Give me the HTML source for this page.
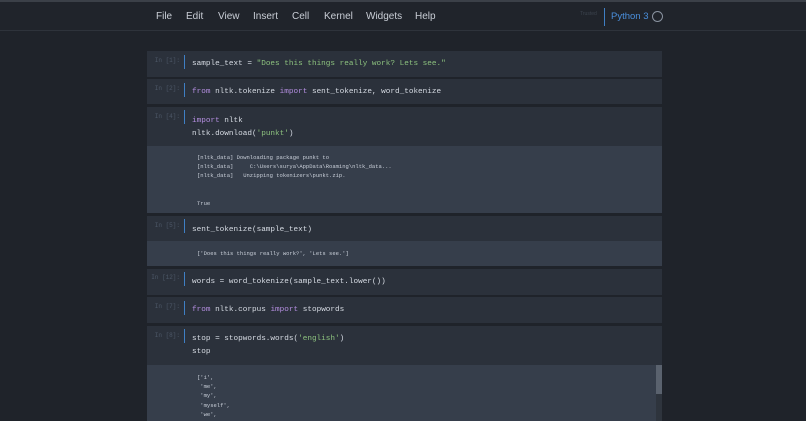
<!DOCTYPE html><html style="overflow:hidden;height:421px"><head><style>
body{margin:0;width:806px;height:421px;overflow:hidden;background:#1f232a;font-family:"Liberation Sans",sans-serif;position:relative}
.top{position:absolute;left:0;top:0;width:806px;height:2px;background:#3b4048}
.hdr{position:absolute;left:0;top:2px;width:806px;height:28px;background:#20242b;border-bottom:1px solid #2e333b}
.m{position:absolute;top:9px;font-size:10px;color:#c9ced6}
.cell{position:absolute;left:147px;width:515px;background:#2b313b}
.p{position:absolute;left:0;width:33px;text-align:right;font-family:"Liberation Mono",monospace;font-size:6px;color:#4d5868}
.bar{position:absolute;left:37px;width:1px;background:#3f7fc4}
.code{position:absolute;left:45px;font-family:"Liberation Mono",monospace;font-size:7.7px;color:#d6dbe3;white-space:pre;line-height:13px}
.out{position:absolute;left:0;width:515px;background:#363e4b;overflow:hidden}
.o{position:absolute;left:50px;font-family:"Liberation Mono",monospace;font-size:5.5px;color:#c8ced8;white-space:pre;line-height:9.2px}
.k{color:#b48ee0}.s{color:#8cc17e}
</style></head><body>
<div class="top"></div>
<div class="hdr">
<span class="m" style="left:156px">File</span><span class="m" style="left:186px">Edit</span><span class="m" style="left:218px">View</span><span class="m" style="left:253px">Insert</span><span class="m" style="left:292px">Cell</span><span class="m" style="left:324px">Kernel</span><span class="m" style="left:366px">Widgets</span><span class="m" style="left:415px">Help</span>
<span style="position:absolute;left:580px;top:9px;font-size:5px;color:#3c434e">Trusted</span>
<div style="position:absolute;left:604px;top:6px;width:1px;height:18px;background:#3f7fc4"></div>
<span class="m" style="left:611px;color:#4a8fdc;font-size:9.5px">Python 3</span>
<div style="position:absolute;left:652px;top:9px;width:9px;height:9px;border:1px solid #8a93a0;border-radius:50%"></div>
</div>

<div class="cell" style="top:51px;height:26px"><span class="p" style="top:6px">In [1]:</span><div class="bar" style="top:4px;height:14px"></div><span class="code" style="top:7px">sample_text = <span class="s">"Does this things really work? Lets see."</span></span></div>

<div class="cell" style="top:79px;height:25px"><span class="p" style="top:6px">In [2]:</span><div class="bar" style="top:4px;height:14px"></div><span class="code" style="top:7px"><span class="k">from</span> nltk.tokenize <span class="k">import</span> sent_tokenize, word_tokenize</span></div>

<div class="cell" style="top:107px;height:106px"><span class="p" style="top:6px">In [4]:</span><div class="bar" style="top:3px;height:14px"></div><span class="code" style="top:8px"><span class="k">import</span> nltk
nltk.download(<span class="s">'punkt'</span>)</span>
<div class="out" style="top:39px;height:67px"><span class="o" style="top:7px">[nltk_data] Downloading package punkt to
[nltk_data]     C:\Users\surya\AppData\Roaming\nltk_data...
[nltk_data]   Unzipping tokenizers\punkt.zip.


True</span></div></div>

<div class="cell" style="top:216px;height:50px"><span class="p" style="top:6px">In [5]:</span><div class="bar" style="top:3px;height:14px"></div><span class="code" style="top:8px">sent_tokenize(sample_text)</span>
<div class="out" style="top:25px;height:25px"><span class="o" style="top:8px">['Does this things really work?', 'Lets see.']</span></div></div>

<div class="cell" style="top:269px;height:26px"><span class="p" style="top:5px">In [12]:</span><div class="bar" style="top:3px;height:14px"></div><span class="code" style="top:7px">words = word_tokenize(sample_text.lower())</span></div>

<div class="cell" style="top:297px;height:26px"><span class="p" style="top:6px">In [7]:</span><div class="bar" style="top:4px;height:14px"></div><span class="code" style="top:7px"><span class="k">from</span> nltk.corpus <span class="k">import</span> stopwords</span></div>

<div class="cell" style="top:326px;height:95px"><span class="p" style="top:6px">In [8]:</span><div class="bar" style="top:3px;height:14px"></div><span class="code" style="top:7px">stop = stopwords.words(<span class="s">'english'</span>)
stop</span>
<div class="out" style="top:39px;height:56px"><span class="o" style="top:8px">['i',
 'me',
 'my',
 'myself',
 'we',
 'our',</span>
<div style="position:absolute;left:509px;top:0;width:6px;height:56px;background:#2e343d"></div>
<div style="position:absolute;left:509px;top:0;width:6px;height:29px;background:#5a626e"></div></div></div>
</body></html>
